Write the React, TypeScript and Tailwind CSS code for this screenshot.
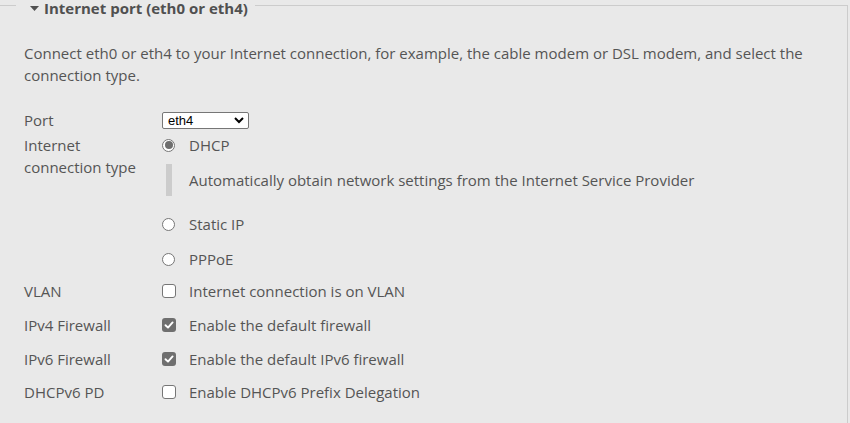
import React from "react";

const Radio = ({ checked }: { checked?: boolean }) => (
    <div className="w-[13px] h-[13px] rounded-full border border-[#767676] bg-white flex items-center justify-center shrink-0">
        {checked ? <div className="w-[8px] h-[8px] rounded-full bg-[#6f6f6f]"></div> : null}
    </div>
);

const Checkbox = ({ checked }: { checked?: boolean }) =>
    checked ? (
        <div className="w-[14px] h-[14px] rounded-[3px] bg-[#6f6f6f] flex items-center justify-center shrink-0">
            <svg width="10" height="10" viewBox="0 0 10 10">
                <path d="M1.5 5.2 L4 7.6 L8.6 2.4" fill="none" stroke="white" strokeWidth="1.9" strokeLinecap="round" strokeLinejoin="round" />
            </svg>
        </div>
    ) : (
        <div className="w-[14px] h-[14px] rounded-[3px] border border-[#767676] bg-white shrink-0"></div>
    );

const Row = ({ label, className, children }: { label: React.ReactNode; className?: string; children: React.ReactNode }) => (
    <div className={"flex " + (className || "")}>
        <div className="w-[138px] shrink-0">{label}</div>
        <div className="flex-1">{children}</div>
    </div>
);

const Option = ({ control, text }: { control: React.ReactNode; text: string }) => (
    <div className="flex items-center h-[22px]">
        <div className="w-[27px] flex items-center">{control}</div>
        <span>{text}</span>
    </div>
);

const App = () => {
    return (
        <div className="w-[850px] h-[423px] bg-[#e9e9e9] overflow-hidden pt-[5px] text-[15px] leading-[22px] text-[#555]" style={{ fontFamily: "'Open Sans', sans-serif" }}>
            <div className="border-t border-r border-[#cccccc] mr-[2px] h-[420px]">
                <div className="-mt-[6px] ml-[16px] flex w-fit items-center bg-[#e9e9e9] pl-[14px] pr-[7px] h-[16px] leading-[16px] font-bold text-[15px] text-[#505050]">
                    <svg width="9" height="5" viewBox="0 0 9 5" className="mr-[5px]">
                        <path d="M0 0 H9 L4.5 5 Z" fill="#505050" />
                    </svg>
                    <span>Internet port (eth0 or eth4)</span>
                </div>

                <div className="pl-[24px] pr-[30px] mt-[26px]">
                    <p>Connect eth0 or eth4 to your Internet connection, for example, the cable modem or DSL modem, and select the connection type.</p>

                    <Row label="Port" className="mt-[23px] items-center h-[22px]">
                        <div className="w-[87px] h-[17px] bg-white border border-[#767676] rounded-[2px] flex items-center justify-between pl-[5px] pr-[3px] text-[13px] text-black" style={{ fontFamily: "'Liberation Sans', Arial, sans-serif" }}>
                            <span className="leading-none">eth4</span>
                            <svg width="12" height="8" viewBox="0 0 12 8">
                                <path d="M2 2 L6 6 L10 2" fill="none" stroke="black" strokeWidth="2" />
                            </svg>
                        </div>
                    </Row>

                    <Row label={<div className="w-[120px]">Internet connection type</div>} className="mt-[3px]">
                        <Option control={<Radio checked />} text="DHCP" />
                        <div className="flex mt-[8px] ml-[4px]">
                            <div className="w-[6px] bg-[#cccccc]"></div>
                            <div className="py-[5px] pl-[17px]">Automatically obtain network settings from the Internet Service Provider</div>
                        </div>
                        <div className="mt-[17px]">
                            <Option control={<Radio />} text="Static IP" />
                        </div>
                        <div className="mt-[13px]">
                            <Option control={<Radio />} text="PPPoE" />
                        </div>
                    </Row>

                    <Row label="VLAN" className="mt-[10px]">
                        <Option control={<Checkbox />} text="Internet connection is on VLAN" />
                    </Row>
                    <Row label="IPv4 Firewall" className="mt-[12px]">
                        <Option control={<Checkbox checked />} text="Enable the default firewall" />
                    </Row>
                    <Row label="IPv6 Firewall" className="mt-[12px]">
                        <Option control={<Checkbox checked />} text="Enable the default IPv6 firewall" />
                    </Row>
                    <Row label="DHCPv6 PD" className="mt-[11px]">
                        <Option control={<Checkbox />} text="Enable DHCPv6 Prefix Delegation" />
                    </Row>
                </div>
            </div>
        </div>
    );
};

export default App;
